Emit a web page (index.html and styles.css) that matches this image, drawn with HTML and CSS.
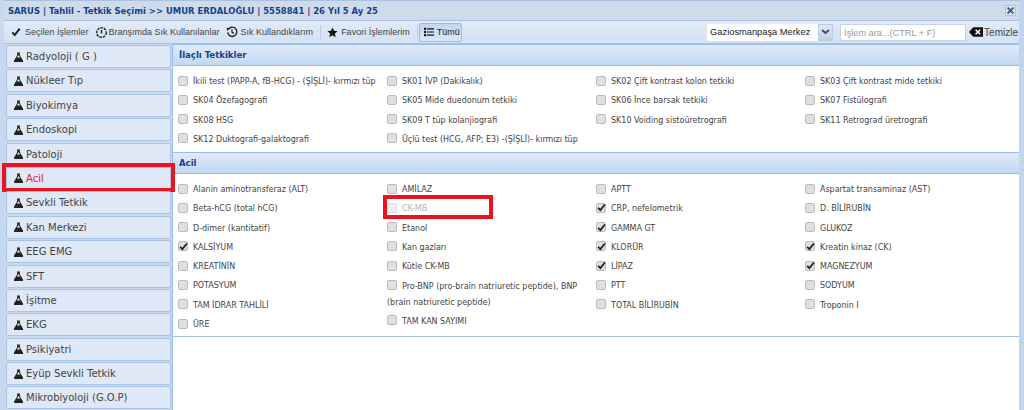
FILE: index.html
```html
<!DOCTYPE html>
<html lang="tr">
  <head>
    <meta charset="UTF-8" />
    <title>SARUS | Tahlil - Tetkik Seçimi</title>
    <link rel="stylesheet" href="styles.css">
  </head>
  <body>
    <svg class="defs" width="0" height="0">
      <symbol id="flask" viewBox="0 0 9 10">
        <path d="M3 .5h3v1h-.4l.6 2.500 2.800 4.500v1.500h-9v-1.500l2.800-4.500.6-2.500h-.4z" fill="#222" />
        <path d="M4 3.500h1l1 2h-3z" fill="#e8eef8" />
      </symbol>
      <symbol id="tick" viewBox="0 0 12 12">
        <path d="M1.500 6.500l3 3 6-7.500" fill="none" stroke="#222" stroke-width="2.400" />
      </symbol>
    </svg>

    <div class="window">
      <header class="titlebar">
        <span class="title">SARUS | Tahlil - Tetkik Seçimi &gt;&gt; UMUR ERDALOĞLU | 5558841 | 26 Yıl 5 Ay 25</span>
        <button class="close">
          <svg width="9" height="9" viewBox="0 0 9 9"><path d="M1.500 1.500l6 6M7.500 1.500l-6 6" stroke="#2f5f9e" stroke-width="1.800" /></svg>
        </button>
      </header>

      <div class="toolbar">
        <span class="tool tool-first">
          <svg width="10" height="10"><use href="#tick" /></svg>Seçilen İşlemler
        </span>
        <span class="tool tool-tight">
          <svg width="13" height="13" viewBox="0 0 13 13"><circle cx="6.500" cy="6.500" r="4.800" fill="none" stroke="#333" stroke-width="1.600" stroke-dasharray="2.500 1" /><path d="M6.500 4v3.500" stroke="#222" stroke-width="1.500" /></svg>Branşımda Sık Kullanılanlar
        </span>
        <span class="tool">
          <svg width="12" height="12" viewBox="0 0 13 13"><path d="M2.300 4a5 5 0 1 1-.5 3" fill="none" stroke="#222" stroke-width="1.500" /><path d="M.5 2l3.500 .5-2.500 3z" fill="#222" /><path d="M6.500 3.500v3.200l2.200 1.300" fill="none" stroke="#222" stroke-width="1.300" /></svg>Sık Kullandıklarım
        </span>
        <span class="sep"></span>
        <span class="tool tool-flush">
          <svg width="11" height="11" viewBox="0 0 13 13"><path d="M6.500 .5l1.800 4 4.200 .4-3.200 2.800 1 4.300-3.800-2.300-3.800 2.300 1-4.300-3.200-2.800 4.200-.4z" fill="#111" /></svg>Favori İşlemlerim
        </span>
        <span class="sep"></span>
        <span class="tool tool-active">
          <svg width="10" height="10" viewBox="0 0 12 12"><path d="M0 1h2.500v2.500h-2.500zM0 4.800h2.500v2.500h-2.500zM0 8.500h2.500v2.500h-2.500zM3.500 1.500h8.500v1.400h-8.500zM3.500 5.300h8.500v1.400h-8.500zM3.500 9h8.500v1.400h-8.500z" fill="#111" /></svg>Tümü
        </span>

        <div class="toolbar-right">
          <div class="combo">
            <span class="combo-text">Gaziosmanpaşa Merkez</span>
            <span class="combo-btn">
              <svg width="9" height="6" viewBox="0 0 9 6"><path d="M1 1l3.500 3 3.500-3" fill="none" stroke="#1f4f8f" stroke-width="1.800" /></svg>
            </span>
          </div>
          <span class="search">İşlem ara...(CTRL + F)</span>
          <span class="clear">
            <svg width="14" height="10" viewBox="0 0 15 10"><path d="M4.500 0h10.500v10h-10.500l-4.500-5z" fill="#111" /><path d="M7 2.500l5 5M12 2.500l-5 5" stroke="#fff" stroke-width="1.600" /></svg>Temizle
          </span>
        </div>
      </div>

      <div class="main">
        <nav class="sidebar">
          <a class="cat"><svg width="9" height="10"><use href="#flask" /></svg>Radyoloji ( G )</a>
          <a class="cat"><svg width="9" height="10"><use href="#flask" /></svg>Nükleer Tıp</a>
          <a class="cat"><svg width="9" height="10"><use href="#flask" /></svg>Biyokimya</a>
          <a class="cat"><svg width="9" height="10"><use href="#flask" /></svg>Endoskopi</a>
          <a class="cat"><svg width="9" height="10"><use href="#flask" /></svg>Patoloji</a>
          <a class="cat cat-active"><svg width="9" height="10"><use href="#flask" /></svg>Acil<span class="mark mark-acil"></span></a>
          <a class="cat"><svg width="9" height="10"><use href="#flask" /></svg>Sevkli Tetkik</a>
          <a class="cat"><svg width="9" height="10"><use href="#flask" /></svg>Kan Merkezi</a>
          <a class="cat"><svg width="9" height="10"><use href="#flask" /></svg>EEG EMG</a>
          <a class="cat"><svg width="9" height="10"><use href="#flask" /></svg>SFT</a>
          <a class="cat"><svg width="9" height="10"><use href="#flask" /></svg>İşitme</a>
          <a class="cat"><svg width="9" height="10"><use href="#flask" /></svg>EKG</a>
          <a class="cat"><svg width="9" height="10"><use href="#flask" /></svg>Psikiyatri</a>
          <a class="cat"><svg width="9" height="10"><use href="#flask" /></svg>Eyüp Sevkli Tetkik</a>
          <a class="cat"><svg width="9" height="10"><use href="#flask" /></svg>Mikrobiyoloji (G.O.P)</a>
        </nav>

        <div class="content">
          <section class="panel">
            <h2 class="panel-head">İlaçlı Tetkikler</h2>
            <div class="panel-body panel-body-first">
              <div class="col">
                <div class="item"><span class="cb"></span>İkili test (PAPP-A, fB-HCG) - (ŞİŞLİ)- kırmızı tüp</div>
                <div class="item"><span class="cb"></span>SK04 Özefagografi</div>
                <div class="item"><span class="cb"></span>SK08 HSG</div>
                <div class="item"><span class="cb"></span>SK12 Duktografi-galaktografi</div>
              </div>
              <div class="col">
                <div class="item"><span class="cb"></span>SK01 İVP (Dakikalık)</div>
                <div class="item"><span class="cb"></span>SK05 Mide duedonum tetkiki</div>
                <div class="item"><span class="cb"></span>SK09 T tüp kolanjiografi</div>
                <div class="item"><span class="cb"></span>Üçlü test (HCG, AFP; E3) -(ŞİŞLİ)- kırmızı tüp</div>
              </div>
              <div class="col">
                <div class="item"><span class="cb"></span>SK02 Çift kontrast kolon tetkiki</div>
                <div class="item"><span class="cb"></span>SK06 İnce barsak tetkiki</div>
                <div class="item"><span class="cb"></span>SK10 Voiding sistoüretrografi</div>
              </div>
              <div class="col">
                <div class="item"><span class="cb"></span>SK03 Çift kontrast mide tetkiki</div>
                <div class="item"><span class="cb"></span>SK07 Fistülografi</div>
                <div class="item"><span class="cb"></span>SK11 Retrograd üretrografi</div>
              </div>
            </div>
          </section>

          <section class="panel">
            <h2 class="panel-head">Acil</h2>
            <div class="panel-body panel-body-last">
              <div class="col">
                <div class="item"><span class="cb"></span>Alanin aminotransferaz (ALT)</div>
                <div class="item"><span class="cb"></span>Beta-hCG (total hCG)</div>
                <div class="item"><span class="cb"></span>D-dimer (kantitatif)</div>
                <div class="item"><span class="cb on"><svg width="9" height="9"><use href="#tick" /></svg></span>KALSİYUM</div>
                <div class="item"><span class="cb"></span>KREATİNİN</div>
                <div class="item"><span class="cb"></span>POTASYUM</div>
                <div class="item"><span class="cb"></span>TAM İDRAR TAHLİLİ</div>
                <div class="item"><span class="cb"></span>ÜRE</div>
              </div>
              <div class="col">
                <div class="item"><span class="cb"></span>AMİLAZ</div>
                <div class="item item-off"><span class="cb"></span>CK-MB<span class="mark mark-ckmb"></span></div>
                <div class="item"><span class="cb"></span>Etanol</div>
                <div class="item"><span class="cb"></span>Kan gazları</div>
                <div class="item"><span class="cb"></span>Kütle CK-MB</div>
                <div class="item item-wrap"><span class="cb"></span>Pro-BNP (pro-brain natriuretic peptide), BNP (brain natriuretic peptide)</div>
                <div class="item"><span class="cb"></span>TAM KAN SAYIMI</div>
              </div>
              <div class="col">
                <div class="item"><span class="cb"></span>APTT</div>
                <div class="item"><span class="cb on"><svg width="9" height="9"><use href="#tick" /></svg></span>CRP, nefelometrik</div>
                <div class="item"><span class="cb on"><svg width="9" height="9"><use href="#tick" /></svg></span>GAMMA GT</div>
                <div class="item"><span class="cb on"><svg width="9" height="9"><use href="#tick" /></svg></span>KLORÜR</div>
                <div class="item"><span class="cb on"><svg width="9" height="9"><use href="#tick" /></svg></span>LİPAZ</div>
                <div class="item"><span class="cb"></span>PTT</div>
                <div class="item"><span class="cb"></span>TOTAL BİLİRUBİN</div>
              </div>
              <div class="col">
                <div class="item"><span class="cb"></span>Aspartat transaminaz (AST)</div>
                <div class="item"><span class="cb"></span>D. BİLİRUBİN</div>
                <div class="item"><span class="cb"></span>GLUKOZ</div>
                <div class="item"><span class="cb on"><svg width="9" height="9"><use href="#tick" /></svg></span>Kreatin kinaz (CK)</div>
                <div class="item"><span class="cb on"><svg width="9" height="9"><use href="#tick" /></svg></span>MAGNEZYUM</div>
                <div class="item"><span class="cb"></span>SODYUM</div>
                <div class="item"><span class="cb"></span>Troponin I</div>
              </div>
            </div>
          </section>
        </div>
      </div>
    </div>
  </body>
</html>
```

FILE: styles.css
```css
html,
body {
  margin: 0;
  padding: 0;
  height: 100%;
  overflow: hidden;
}

body {
  font-family: "Liberation Sans", Arial, sans-serif;
  font-size: 9px;
  color: #333;
  background: #fff;
}

.defs {
  position: absolute;
}

.window {
  height: 410px;
  display: flex;
  flex-direction: column;
  border-left: 4px solid #c8d9ef;
  border-right: 5px solid #c3d5ec;
  background: #dbe6f5;
}

.titlebar {
  height: 19px;
  border-top: 1px solid #a9c2e0;
  display: flex;
  align-items: center;
  justify-content: space-between;
  padding: 0 3px 0 4px;
  background: #cfdbea;
  border-bottom: 1px solid #a8c1e0;
}

.title {
  font-family: "DejaVu Sans Condensed", "DejaVu Sans", sans-serif;
  font-size: 9.400px;
  font-weight: bold;
  color: #15428b;
}

.close {
  width: 11px;
  height: 11px;
  padding: 0;
  display: flex;
  align-items: center;
  justify-content: center;
  background: #dfe9f6;
  border: 1px solid #a9c2e0;
  box-sizing: border-box;
}

.toolbar {
  height: 22px;
  display: flex;
  align-items: center;
  padding-left: 7px;
  background: linear-gradient(#e2ebf7, #d3e1f2);
  border-bottom: 1px solid #a8c1e0;
  color: #444;
}

.tool {
  display: flex;
  align-items: center;
  gap: 3px;
  margin-left: 6px;
  white-space: nowrap;
}

.tool-first {
  margin-left: 0;
  gap: 4px;
}

.tool-tight {
  gap: 1px;
}

.tool-flush {
  margin-left: 0;
}

.tool-active {
  height: 17px;
  margin-left: -5px;
  padding: 0 1px 0 4px;
  color: #223;
  border: 1px solid #9dbce2;
  border-radius: 2px;
  background: linear-gradient(#c0d6f0, #d9e7f7);
}

.sep {
  width: 1px;
  height: 14px;
  margin: 0 6px 0 7px;
  background: #bccfe6;
}

.toolbar-right {
  margin-left: auto;
  display: flex;
  align-items: center;
  padding-right: 1px;
}

.combo {
  display: flex;
  height: 17px;
}

.combo-text {
  width: 108px;
  padding-left: 3px;
  font-size: 9.300px;
  line-height: 17px;
  white-space: nowrap;
  background: #fff;
  color: #222;
}

.combo-btn {
  width: 15px;
  display: flex;
  align-items: center;
  justify-content: center;
  background: linear-gradient(#dfe9f6, #c2cede);
  border: 1px solid #bccde2;
  box-sizing: border-box;
}

.search {
  width: 126px;
  height: 17px;
  line-height: 17px;
  margin-left: 7px;
  padding-left: 3px;
  font-size: 9.200px;
  background: #fff;
  border: 1px solid #c5d4e6;
  box-sizing: border-box;
  color: #9a9a9a;
}

.clear {
  display: flex;
  align-items: center;
  gap: 1px;
  margin-left: 3px;
  font-size: 10px;
  color: #444;
}

.main {
  flex: 1;
  display: flex;
  min-height: 0;
}

.sidebar {
  width: 165px;
  flex: none;
  padding: 1px 1px 0 2px;
  display: flex;
  flex-direction: column;
  gap: 1.400px;
  background: #c9daf0;
  border-right: 1px solid #99bbe8;
}

.cat {
  position: relative;
  height: 21px;
  flex: none;
  display: flex;
  align-items: center;
  gap: 3px;
  padding-left: 7px;
  background: #dfe8f6;
  border: 1px solid #a9c4e6;
  border-radius: 2px;
  font-family: "DejaVu Sans", sans-serif;
  font-size: 10px;
  color: #444;
}

.cat-active {
  color: #e8213a;
}

.mark {
  position: absolute;
  border: 4px solid #e8141f;
  box-sizing: border-box;
}

.mark-acil {
  left: -5px;
  right: -5px;
  top: -5px;
  bottom: -3px;
}

.mark-ckmb {
  left: -4px;
  top: -4px;
  width: 110px;
  height: 24px;
}

.content {
  flex: 1;
  min-width: 0;
  background: #fff;
}

.panel-head {
  margin: 0;
  height: 20px;
  line-height: 20px;
  padding-left: 6px;
  font-family: "DejaVu Sans Condensed", "DejaVu Sans", sans-serif;
  font-size: 9.500px;
  font-weight: bold;
  color: #15428b;
  background: linear-gradient(#dfeafa, #c2d8f3);
  border-top: 1px solid #99bbe8;
  border-bottom: 1px solid #99bbe8;
}

.panel-body {
  display: flex;
  padding: 6px 0 0 5px;
  box-sizing: border-box;
}

.panel-body-first {
  height: 86px;
}

.panel-body-last {
  height: 163px;
  border-bottom: 1px solid #a9c2e0;
}

.col {
  width: 209px;
  flex: none;
}

.item {
  position: relative;
  height: 19.300px;
  line-height: 19px;
  font-family: "DejaVu Sans Condensed", "DejaVu Sans", sans-serif;
  font-size: 8.900px;
  color: #444;
  white-space: nowrap;
}

.item-wrap {
  height: 35.200px;
  white-space: normal;
  line-height: 16px;
  padding-top: 1.500px;
  box-sizing: border-box;
  width: 205px;
}

.item-off {
  color: #b5b5b5;
}

.cb {
  display: inline-flex;
  align-items: center;
  justify-content: center;
  vertical-align: middle;
  width: 10px;
  height: 10px;
  box-sizing: border-box;
  margin-right: 5px;
  margin-top: -2px;
  background: #dfdfdf;
  border: 1px solid #bbb;
  border-radius: 2px;
}

.cb svg {
  flex: none;
}

.item-off .cb {
  background: #f0f0f0;
  border-color: #ddd;
}
```
